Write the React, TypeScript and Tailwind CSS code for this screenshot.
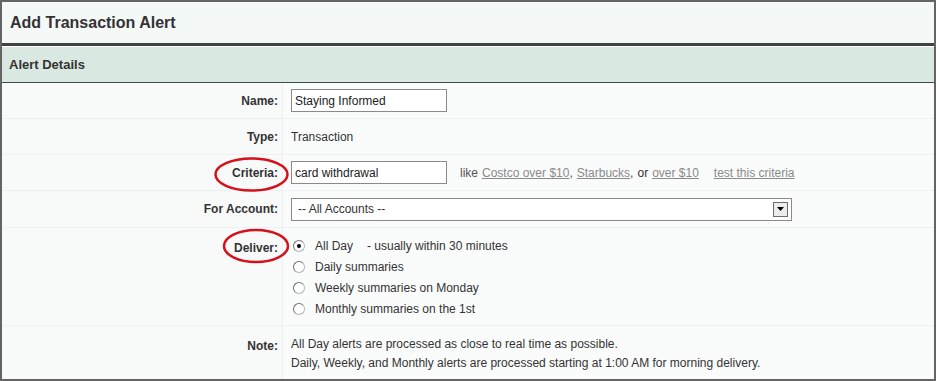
import React from "react";

function Radio({ checked }: { checked?: boolean }) {
  return (
    <span className="relative inline-flex h-[12px] w-[12px] items-center justify-center rounded-full border border-[#b5b5b5] border-t-[#707070] border-l-[#707070] bg-white">
      {checked && <span className="h-[4px] w-[4px] rounded-full bg-black" />}
    </span>
  );
}

function Row({
  label,
  children,
  className = "",
  labelClass = "",
}: {
  label: string;
  children: React.ReactNode;
  className?: string;
  labelClass?: string;
}) {
  return (
    <div className={`flex border-b border-[#eef1f1] ${className}`}>
      <div
        className={`w-[281px] shrink-0 border-r border-[#eef1f1] bg-[#f8f9f9] pr-[4px] text-right font-bold text-[#333] ${labelClass}`}
      >
        {label}
      </div>
      <div className="flex-1 bg-[#fafbfb] pl-[8px] text-[#333]">{children}</div>
    </div>
  );
}

export default function App() {
  return (
    <div
      className="relative h-[381px] w-[936px] overflow-hidden border-2 border-[#646464] bg-[#fafbfb] text-[12px]"
      style={{ fontFamily: '"Liberation Sans", Arial, sans-serif' }}
    >
      <div className="flex h-[44px] items-center border-b-[3px] border-[#414141] bg-[#f4f8f7] pl-[8px] text-[16px] font-bold text-[#333]">
        Add Transaction Alert
      </div>
      <div className="flex h-[37px] items-center border-t border-white border-b border-b-[#3c4a46] bg-[#d9e9e1] pl-[7px] text-[13px] font-bold text-[#333]">
        Alert Details
      </div>

      <Row label="Name:" className="h-[36px]" labelClass="flex items-center justify-end">
        <div className="flex h-full items-center">
          <input
            readOnly
            value="Staying Informed"
            className="h-[23px] w-[156px] border border-[#8a8a8a] bg-white px-[3px] text-[12px] text-[#222] outline-none"
          />
        </div>
      </Row>
      <Row label="Type:" className="h-[36px]" labelClass="flex items-center justify-end">
        <div className="flex h-full items-center">Transaction</div>
      </Row>
      <Row label="Criteria:" className="h-[36px]" labelClass="flex items-center justify-end">
        <div className="flex h-full items-center">
          <input
            readOnly
            value="card withdrawal"
            className="h-[23px] w-[156px] border border-[#8a8a8a] bg-white px-[3px] text-[12px] text-[#222] outline-none"
          />
          <span className="ml-[13px] text-[#555]">like </span>
          <a className="ml-[4px] text-[#8a8a8a] underline">Costco over $10</a>
          <span className="text-[#555]">,</span>
          <a className="ml-[4px] text-[#8a8a8a] underline">Starbucks</a>
          <span className="text-[#555]">,</span>
          <span className="ml-[4px] text-[#333]">or</span>
          <a className="ml-[4px] text-[#8a8a8a] underline">over $10</a>
          <a className="ml-[15px] text-[#8a8a8a] underline">test this criteria</a>
        </div>
      </Row>
      <Row label="For Account:" className="h-[37px]" labelClass="flex items-center justify-end">
        <div className="flex h-full items-center">
          <div className="flex h-[23px] w-[501px] items-center justify-between border border-[#8a8a8a] bg-white pl-[6px] pr-[3px] text-[#333]">
            <span>-- All Accounts --</span>
            <span className="flex h-[15px] w-[15px] items-center justify-center border border-[#6e6e6e] bg-[#ececec]">
              <svg width="7" height="4" viewBox="0 0 7 4">
                <path d="M0 0h7L3.5 4z" fill="#000" />
              </svg>
            </span>
          </div>
        </div>
      </Row>
      <Row label="Deliver:" className="h-[98px]" labelClass="pt-[11px]">
        <div className="flex flex-col gap-[7px] pt-[11px]">
          <div className="flex h-[14px] items-center pl-[2px]">
            <Radio checked />
            <span className="ml-[10px]">All Day</span>
            <span className="ml-[14px]">- usually within 30 minutes</span>
          </div>
          <div className="flex h-[14px] items-center pl-[2px]">
            <Radio />
            <span className="ml-[10px]">Daily summaries</span>
          </div>
          <div className="flex h-[14px] items-center pl-[2px]">
            <Radio />
            <span className="ml-[10px]">Weekly summaries on Monday</span>
          </div>
          <div className="flex h-[14px] items-center pl-[2px]">
            <Radio />
            <span className="ml-[10px]">Monthly summaries on the 1st</span>
          </div>
        </div>
      </Row>
      <Row label="Note:" className="h-[60px] border-b-0" labelClass="pt-[11px]">
        <div className="flex flex-col gap-[5px] pt-[11px] leading-[14px]">
          <div>All Day alerts are processed as close to real time as possible.</div>
          <div>Daily, Weekly, and Monthly alerts are processed starting at 1:00 AM for morning delivery.</div>
        </div>
      </Row>

      <svg
        className="pointer-events-none absolute left-[211px] top-[154px]"
        width="78"
        height="38"
        viewBox="0 0 78 38"
      >
        <ellipse cx="38.5" cy="18.5" rx="36" ry="16" fill="none" stroke="#d4101c" strokeWidth="2.5" />
      </svg>
      <svg
        className="pointer-events-none absolute left-[220px] top-[226px]"
        width="70"
        height="38"
        viewBox="0 0 70 38"
      >
        <ellipse cx="34" cy="18" rx="32" ry="16" fill="none" stroke="#d4101c" strokeWidth="2.5" />
      </svg>
    </div>
  );
}
